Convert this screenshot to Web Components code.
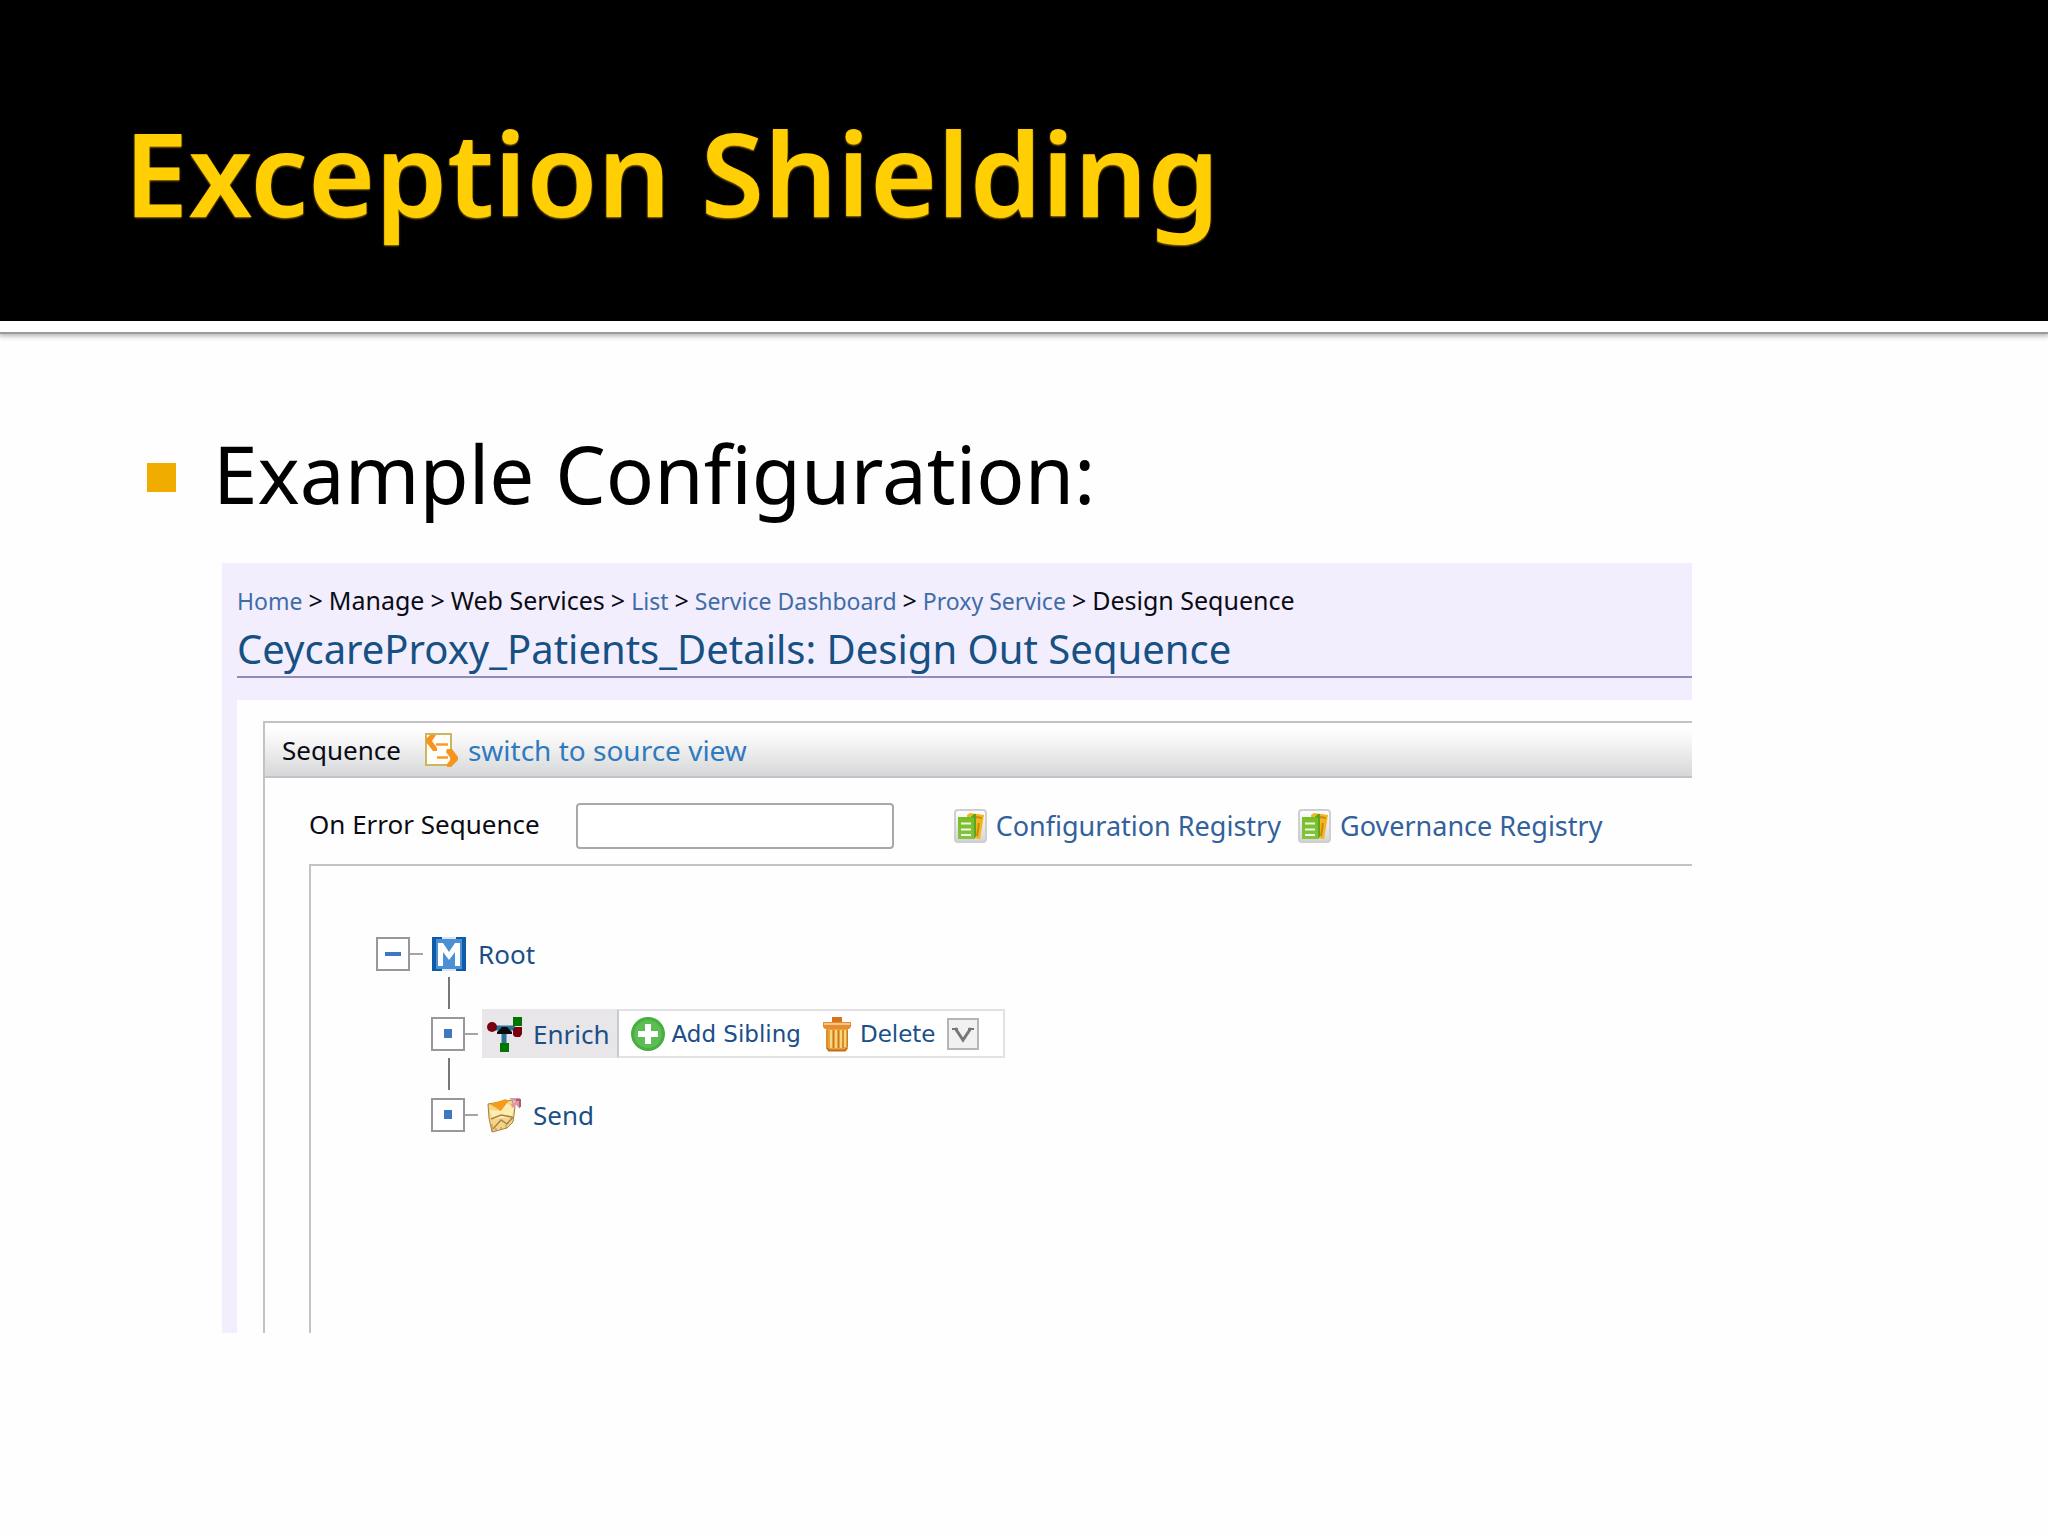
<!DOCTYPE html>
<html lang="en">
<head>
<meta charset="utf-8">
<title>Exception Shielding</title>
<style>
  body {
    margin: 0;
    background: #fefefe;
    font-family: "Noto Sans", "Open Sans", sans-serif;
  }
</style>
</head>
<body>
<slide-page>
  <span slot="title">Exception Shielding</span>
  <slide-bullet>Example Configuration:</slide-bullet>
  <console-view heading="CeycareProxy_Patients_Details: Design Out Sequence">
    <bread-crumbs slot="crumbs"></bread-crumbs>
    <sequence-panel>
      <tree-node label="Root" icon="mediator" state="open">
        <tree-node label="Enrich" icon="enrich" selected>
          <node-actions slot="actions"></node-actions>
        </tree-node>
        <tree-node label="Send" icon="send"></tree-node>
      </tree-node>
    </sequence-panel>
  </console-view>
</slide-page>

<script>
"use strict";

(() => {
  const ICONS = {
    source: `
      <rect x="1" y="1" width="25" height="31" fill="#fffef8" stroke="#cdb65f" stroke-width="2"/>
      <path d="M1 6 5 2H11L7 8 12 15V18H8L1 9Z" fill="#f7941e"/>
      <path d="M22 16H27L33 24V27L26 34H22V31L26 26 21 19Z" fill="#f7941e"/>
      <path d="M11 11.500H23M12 24.500H23" stroke="#fb9a2c" stroke-width="2.500"/>`,
    registry: `
      <defs>
        <linearGradient id="tile" x2="0" y2="1"><stop stop-color="#fff"/><stop offset="1" stop-color="#d3d3d3"/></linearGradient>
        <linearGradient id="leaf" x2="0" y2="1"><stop stop-color="#76bd25"/><stop offset="1" stop-color="#83c341"/></linearGradient>
      </defs>
      <rect x="1" y="1" width="31" height="32" rx="3" fill="url(#tile)" stroke="#cfcfd1" stroke-width="2"/>
      <path d="M13 6 16 4 30 6 26 30 14 28Z" fill="#f4b61d"/>
      <path d="M22 8 28 9M25 14 23 27" stroke="#c98a12" stroke-width="2"/>
      <path d="M4 8H17L20 5H22V27L20 30H4Z" fill="url(#leaf)"/>
      <path d="M17 8 20 5H22V27L20 30V9Z" fill="#5da51c"/>
      <path d="M7 14.500H17M7 20.500H17M7 26H17" stroke="#f0fadf" stroke-width="2"/>`,
    mediator: `
      <rect width="34" height="34" fill="#4a90d3"/>
      <path d="M0 0H10V2H4V32H10V34H0ZM34 0H24V2H30V32H24V34H34Z" fill="#0f5ba7"/>
      <path d="M6 29V6H11L17 15 23 6H28V29H23V15L17 23 11 15V29Z" fill="#fff"/>
      <path d="M10 0H24V2H10ZM10 32H24V34H10Z" fill="#d7e7f6"/>`,
    enrich: `
      <path d="M8 11H28M17 12V28" stroke="#2b7497" stroke-width="5"/>
      <path d="M10 15 15 10H20L25 15V17H10Z" fill="#0b0b0e"/>
      <circle cx="5" cy="10" r="5" fill="#78000f"/>
      <rect x="26" y="0" width="9" height="9" fill="#007500"/>
      <path d="M26 12 28 10H35V17L33 20H28L26 18Z" fill="#78000f"/>
      <rect x="13" y="26" width="9" height="9" fill="#007500"/>`,
    send: `
      <path d="M1 6 25 2 28 9 26 24 20 30 5 34 2 20Z" fill="#f3d489" stroke="#a5803f"/>
      <path d="M3 6 19 1 21 4 14 13Z" fill="#f49a1d"/>
      <path d="M3 12 14 13 20 5 27 10 25 19 5 21Z" fill="#ffedaf"/>
      <path d="M4 21 14 17 25 19M6 31 14 22 20 26 26 19" fill="none" stroke="#a98343" stroke-width="1.500"/>
      <path d="M5 26V33M9 30V33M14 29V32M19 27V30" stroke="#b58a45"/>
      <path d="M22 0 33 0V11L29 7 25 10 24 6 28 4Z" fill="#d99aa5"/>
      <path d="M29 2H33V9" fill="none" stroke="#b8586f" stroke-width="2"/>`,
    add: `
      <circle cx="17" cy="17" r="17" fill="#45af3f"/>
      <circle cx="17" cy="17" r="14" fill="#5dbd52"/>
      <path d="M14 7H20V14H27V20H20V27H14V20H7V14H14Z" fill="#fff"/>`,
    trash: `
      <path d="M9 0H19V5H9Z" fill="#d9731a"/>
      <path d="M0 5H28V10L26 12H2L0 10Z" fill="#e88c2d"/>
      <path d="M1 6H27V8H1Z" fill="#f7c58a"/>
      <path d="M3 12H25V31L22 34H6L3 31Z" fill="#e9a03d"/>
      <path d="M8 13V31M13 13V31M18 13V31M22 13V30" stroke="#fbd67c" stroke-width="2"/>
      <path d="M4 13V31M10.500 13V31M15.500 13V31M20 13V31M24.500 13V30" stroke="#c97a22"/>
      <path d="M4 31 6 33.500H22L24 31" fill="none" stroke="#c46a18" stroke-width="2"/>`,
    chevron: `
      <path d="M8 10 16 22 24 10" fill="none" stroke="#77777a" stroke-width="3"/>
      <path d="M5 11H11M21 11H27" stroke="#77777a" stroke-width="2"/>`
  };

  const LINK_STYLE = `a { color: inherit; text-decoration: none; } a:hover { text-decoration: underline; }`;

  customElements.define("ui-icon", class extends HTMLElement {
    connectedCallback() {
      const w = this.getAttribute("width") || 34;
      const h = this.getAttribute("height") || 34;

      this.attachShadow({mode: "open"}).innerHTML = `
      <style>
      :host { display: block; flex: none; }
      svg { display: block; overflow: visible; }
    </style>
    <svg width="${w}" height="${h}" viewBox="0 0 ${w} ${h}" aria-hidden="true">${ICONS[this.getAttribute("name")]}</svg>
      `;
    }
  });

  customElements.define("slide-page", class extends HTMLElement {
    constructor() {
      super();

      this.attachShadow({mode: "open"}).innerHTML = `
      <style>
      :host { display: block; }
      header {
        background: #000;
        border-bottom: 11px solid #fff;
        box-shadow: 0 2px 0 #9b9b9b, 0 3px 5px 1px rgba(0, 0, 0, 0.3);
        padding: 103px 124px 78px;
      }
      h1 {
        margin: 0;
        color: #ffcf03;
        font-size: 115px;
        font-weight: 600;
        line-height: 140px;
        text-shadow: 0 1px 2px #a87c00;
      }
      main { padding: 85px 356px 0 147px; }
    </style>
    <header><h1><slot name="title"></slot></h1></header>
    <main><slot></slot></main>
      `;
    }
  });

  customElements.define("slide-bullet", class extends HTMLElement {
    constructor() {
      super();

      this.attachShadow({mode: "open"}).innerHTML = `
      <style>
      :host {
        display: flex;
        align-items: center;
        gap: 37px;
        color: #000;
        font-size: 80px;
        line-height: 112px;
        white-space: nowrap;
      }
      :host::before {
        content: "";
        width: 29px;
        height: 29px;
        margin-top: 8px;
        background: #f0ad00;
      }
    </style>
    <slot></slot>
      `;
    }
  });

  customElements.define("console-view", class extends HTMLElement {
    constructor() {
      super();

      this.attachShadow({mode: "open"}).innerHTML = `
      <style>
      :host {
        display: block;
        margin: 34px 0 0 75px;
        padding: 21px 0 0 15px;
        background: #f2eefe;
      }
      h2 {
        margin: 8px 0 22px;
        padding-bottom: 3px;
        border-bottom: 2px solid #8f8cb8;
        color: #175082;
        font-size: 40px;
        font-weight: 400;
        line-height: 48px;
      }
      .content { padding: 21px 0 0 26px; background: #fefefe; }
    </style>
    <slot name="crumbs"></slot>
    <h2></h2>
    <div class="content"><slot></slot></div>
      `;
      this.shadowRoot.querySelector("h2").textContent = this.getAttribute("heading");
    }
  });

  customElements.define("bread-crumbs", class extends HTMLElement {
    constructor() {
      super();

      this.attachShadow({mode: "open"}).innerHTML = `
      <style>
      :host { display: block; color: #0b0b14; font-size: 25px; line-height: 32px; }
      nav { display: flex; align-items: baseline; gap: 6px; white-space: nowrap; }
      ${LINK_STYLE}
      a { color: #3f6ca6; font-size: 23px; }
      i { font-style: normal; font-size: 25px; }
    </style>
    <nav aria-label="Breadcrumb">
      <a href="#home">Home</a><i>&gt;</i>
      <span>Manage</span><i>&gt;</i>
      <span>Web Services</span><i>&gt;</i>
      <a href="#list">List</a><i>&gt;</i>
      <a href="#dashboard">Service Dashboard</a><i>&gt;</i>
      <a href="#proxy">Proxy Service</a><i>&gt;</i>
      <span>Design Sequence</span>
    </nav>
      `;
    }
  });

  customElements.define("sequence-panel", class extends HTMLElement {
    constructor() {
      super();

      this.attachShadow({mode: "open"}).innerHTML = `
      <style>
      :host {
        display: block;
        border: solid #c3c3c5;
        border-width: 2px 0 0 2px;
        color: #0b0b14;
        font-size: 26px;
        line-height: 36px;
      }
      ${LINK_STYLE}
      .bar {
        display: flex;
        align-items: center;
        height: 53px;
        padding-left: 17px;
        border-bottom: 2px solid #c3c3c5;
        background: linear-gradient(#fff 10%, #f1f1f2 45%, #d6d7d8);
      }
      .switch {
        display: flex;
        align-items: center;
        gap: 9px;
        margin-left: 24px;
        color: #2f7abf;
        font-size: 28px;
      }
      .error { display: flex; align-items: center; padding: 25px 0 15px 44px; }
      label { padding-bottom: 4px; }
      input {
        box-sizing: border-box;
        width: 318px;
        height: 46px;
        margin: 0 60px 0 36px;
        border: 2px solid #a9a9ad;
        border-radius: 4px;
        background: #fff;
        font: inherit;
      }
      .registry {
        display: flex;
        align-items: center;
        gap: 8px;
        margin-right: 17px;
        color: #33619c;
        font-size: 27px;
      }
      .canvas {
        box-sizing: border-box;
        min-height: 469px;
        margin-left: 44px;
        padding: 71px 0 0 65px;
        border: solid #c3c3c5;
        border-width: 2px 0 0 2px;
      }
    </style>
    <div class="bar">
      <span>Sequence</span>
      <a class="switch" href="#source"><ui-icon name="source"></ui-icon>switch to source view</a>
    </div>
    <div class="error">
      <label for="onerror">On Error Sequence</label>
      <input id="onerror" type="text">
      <a class="registry" href="#config"><ui-icon name="registry"></ui-icon>Configuration Registry</a>
      <a class="registry" href="#governance"><ui-icon name="registry"></ui-icon>Governance Registry</a>
    </div>
    <div class="canvas"><slot></slot></div>
      `;
    }
  });

  customElements.define("tree-node", class extends HTMLElement {
    constructor() {
      super();

      const label = this.getAttribute("label");
      const icon = this.getAttribute("icon");

      this.attachShadow({mode: "open"}).innerHTML = `
      <style>
      :host { display: block; color: #1a4f88; font-size: 26px; line-height: 36px; }
      ${LINK_STYLE}
      .row { display: flex; align-items: center; height: 49px; }
      .toggle {
        display: grid;
        place-items: center;
        box-sizing: border-box;
        width: 34px;
        height: 34px;
        padding: 0;
        border: 2px solid #98989c;
        background: #fff;
      }
      .toggle::before { content: ""; width: 8px; height: 9px; background: #3f78c0; }
      .stem { width: 13px; height: 2px; margin-right: 4px; background: #a5a5a8; }
      .node {
        display: flex;
        align-items: center;
        gap: 12px;
        height: 49px;
        padding: 0 7px 0 5px;
      }
      :host([selected]) .node { background: #e8e6e8; }
      :host([state="open"]) .row { height: 34px; }
      :host([state="open"]) .toggle::before { width: 16px; height: 4px; }
      .children { margin-left: 55px; }
      :host([state="open"]) .children { padding-top: 6px; }
      ::slotted(tree-node)::before {
        content: "";
        display: block;
        width: 2px;
        height: 32px;
        margin-left: 17px;
        background: #77777a;
      }
    </style>
    <div class="row">
      <button class="toggle" type="button" aria-label="${label}"></button>
      <span class="stem"></span>
      <a class="node" href="#node"><ui-icon name="${icon}"></ui-icon>${label}</a>
      <slot name="actions"></slot>
    </div>
    <div class="children"><slot></slot></div>
      `;
    }
  });

  customElements.define("node-actions", class extends HTMLElement {
    constructor() {
      super();

      this.attachShadow({mode: "open"}).innerHTML = `
      <style>
      :host {
        display: flex;
        align-items: center;
        box-sizing: border-box;
        height: 49px;
        padding: 0 24px 0 12px;
        border: 2px solid #e2e1e4;
        border-left-color: #c9c9cc;
        background: #fff;
        font-family: "DejaVu Sans", sans-serif;
        font-size: 23px;
      }
      ${LINK_STYLE}
      a { display: flex; align-items: center; gap: 7px; margin-right: 22px; }
      a + a { gap: 9px; margin-right: 11px; }
      button {
        box-sizing: border-box;
        width: 32px;
        height: 32px;
        padding: 0;
        border: 2px solid #b5b5b7;
        background: #f1f1f2;
      }
      button ui-icon { margin: -2px; }
    </style>
    <a href="#add"><ui-icon name="add"></ui-icon>Add Sibling</a>
    <a href="#delete"><ui-icon name="trash" width="28"></ui-icon>Delete</a>
    <button type="button" aria-label="More"><ui-icon name="chevron" width="32" height="32"></ui-icon></button>
      `;
    }
  });
})();
</script>
</body>
</html>
